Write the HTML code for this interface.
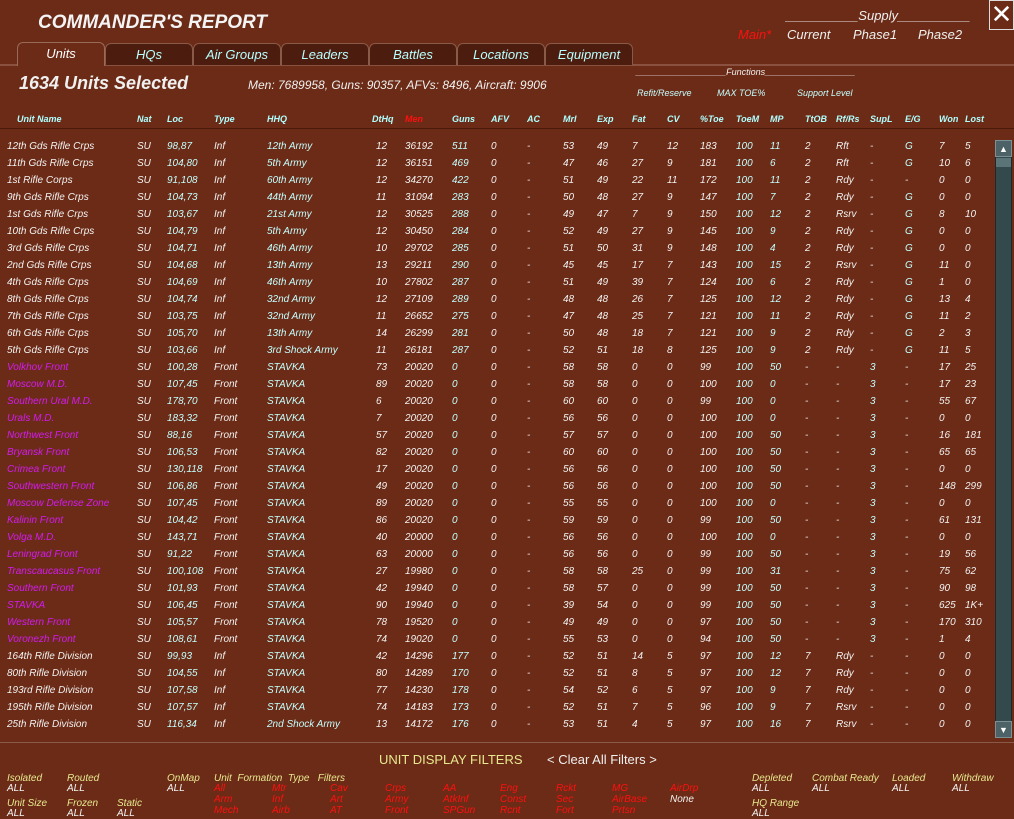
<!DOCTYPE html>
<html><head><meta charset="utf-8"><style>
*{margin:0;padding:0;box-sizing:border-box}
body{width:1014px;height:819px;overflow:hidden;background:#6b2b16;font-family:"Liberation Sans",sans-serif;position:relative;color:#f0f0f0}
.a{position:absolute;white-space:nowrap;font-style:italic}
.title{left:38px;top:12px;font-size:19px;font-weight:bold;color:#f4f4f4}
.tab{position:absolute;top:43px;height:22px;width:88px;border:1px solid #8a5a48;border-bottom:none;border-radius:6px 6px 0 0;background:#4c1d0e;color:#b8ffff;font-size:13px;font-style:italic;text-align:center;line-height:22px}
.tab.act{background:#6b2b16;color:#fff;top:42px;height:24px;border-color:#9a6a58}
.hl{position:absolute;left:0;width:1014px;height:2px;background:#8a5040}
table{position:absolute;left:7px;border-collapse:collapse;table-layout:fixed;font-size:10px;font-style:italic}
td{height:17px;padding:0;white-space:nowrap;overflow:visible;color:#f2f2f2}
thead td{font-weight:bold;color:#b0ffff;font-size:9px}
td.c{color:#c4ffff}
tr.f td:first-child{color:#d21cf0}
.sb{position:absolute;left:995px;top:140px;width:17px;height:598px;background:#33494c;border:1px solid #1d2a2c}
.btn{position:absolute;left:995px;width:17px;height:17px;background:#4c6266;color:#fff;font-size:9px;text-align:center;line-height:17px;border:1px solid #7a9094}
.y{color:#e8e890}.r{color:#ff1010}.w{color:#f4f4f4}
.ft{font-size:10px}
</style></head><body>
<div class="a title">COMMANDER'S REPORT</div>
<div style="position:absolute;left:989px;top:0;width:25px;height:30px;border:1px solid #ddd;color:#fff;font-size:26px;line-height:27px;text-align:center">✕</div>
<div class="a" style="left:786px;top:8px;font-size:13px;color:#f0f0f0">__________Supply__________</div>
<div class="a r" style="left:738px;top:27px;font-size:13px">Main*</div>
<div class="a" style="left:787px;top:27px;font-size:13px">Current</div>
<div class="a" style="left:853px;top:27px;font-size:13px">Phase1</div>
<div class="a" style="left:918px;top:27px;font-size:13px">Phase2</div>
<div class="hl" style="top:64px"></div>
<div class="tab act" style="left:17px">Units</div>
<div class="tab" style="left:105px">HQs</div>
<div class="tab" style="left:193px">Air Groups</div>
<div class="tab" style="left:281px">Leaders</div>
<div class="tab" style="left:369px">Battles</div>
<div class="tab" style="left:457px">Locations</div>
<div class="tab" style="left:545px">Equipment</div>
<div class="a" style="left:19px;top:73px;font-size:18px;font-weight:bold">1634 Units Selected</div>
<div class="a" style="left:248px;top:78px;font-size:12px">Men: 7689958, Guns: 90357, AFVs: 8496, Aircraft: 9906</div>
<div class="a" style="left:636px;top:67px;font-size:9px">__________________Functions__________________</div>
<div class="a" style="left:637px;top:88px;font-size:9px;color:#c4ffff">Refit/Reserve</div>
<div class="a" style="left:717px;top:88px;font-size:9px;color:#c4ffff">MAX TOE%</div>
<div class="a" style="left:797px;top:88px;font-size:9px;color:#c4ffff">Support Level</div>
<div style="position:absolute;left:0;top:128px;width:1014px;height:1px;background:#4a1a0a"></div>
<table style="top:110px">
<colgroup><col style="width:130px"><col style="width:30px"><col style="width:47px"><col style="width:53px"><col style="width:109px"><col style="width:29px"><col style="width:47px"><col style="width:39px"><col style="width:36px"><col style="width:36px"><col style="width:34px"><col style="width:35px"><col style="width:35px"><col style="width:33px"><col style="width:36px"><col style="width:34px"><col style="width:35px"><col style="width:31px"><col style="width:34px"><col style="width:35px"><col style="width:34px"><col style="width:26px"><col style="width:35px"></colgroup>
<thead><tr><td style="padding-left:10px">Unit Name</td><td>Nat</td><td>Loc</td><td>Type</td><td>HHQ</td><td><span style="margin-left:-4px">DtHq</span></td><td style="color:#ff1010">Men</td><td>Guns</td><td>AFV</td><td>AC</td><td>Mrl</td><td>Exp</td><td>Fat</td><td>CV</td><td>%Toe</td><td>ToeM</td><td>MP</td><td>TtOB</td><td>Rf/Rs</td><td>SupL</td><td>E/G</td><td>Won</td><td>Lost</td></tr></thead>
</table>
<table style="top:138px">
<colgroup><col style="width:130px"><col style="width:30px"><col style="width:47px"><col style="width:53px"><col style="width:109px"><col style="width:29px"><col style="width:47px"><col style="width:39px"><col style="width:36px"><col style="width:36px"><col style="width:34px"><col style="width:35px"><col style="width:35px"><col style="width:33px"><col style="width:36px"><col style="width:34px"><col style="width:35px"><col style="width:31px"><col style="width:34px"><col style="width:35px"><col style="width:34px"><col style="width:26px"><col style="width:35px"></colgroup>
<tbody>
<tr><td>12th Gds Rifle Crps</td><td>SU</td><td class="c">98,87</td><td>Inf</td><td class="c">12th Army</td><td>12</td><td>36192</td><td class="c">511</td><td>0</td><td>-</td><td>53</td><td>49</td><td>7</td><td>12</td><td>183</td><td class="c">100</td><td class="c">11</td><td>2</td><td>Rft</td><td>-</td><td class="c">G</td><td>7</td><td>5</td></tr>
<tr><td>11th Gds Rifle Crps</td><td>SU</td><td class="c">104,80</td><td>Inf</td><td class="c">5th Army</td><td>12</td><td>36151</td><td class="c">469</td><td>0</td><td>-</td><td>47</td><td>46</td><td>27</td><td>9</td><td>181</td><td class="c">100</td><td class="c">6</td><td>2</td><td>Rft</td><td>-</td><td class="c">G</td><td>10</td><td>6</td></tr>
<tr><td>1st Rifle Corps</td><td>SU</td><td class="c">91,108</td><td>Inf</td><td class="c">60th Army</td><td>12</td><td>34270</td><td class="c">422</td><td>0</td><td>-</td><td>51</td><td>49</td><td>22</td><td>11</td><td>172</td><td class="c">100</td><td class="c">11</td><td>2</td><td>Rdy</td><td>-</td><td>-</td><td>0</td><td>0</td></tr>
<tr><td>9th Gds Rifle Crps</td><td>SU</td><td class="c">104,73</td><td>Inf</td><td class="c">44th Army</td><td>11</td><td>31094</td><td class="c">283</td><td>0</td><td>-</td><td>50</td><td>48</td><td>27</td><td>9</td><td>147</td><td class="c">100</td><td class="c">7</td><td>2</td><td>Rdy</td><td>-</td><td class="c">G</td><td>0</td><td>0</td></tr>
<tr><td>1st Gds Rifle Crps</td><td>SU</td><td class="c">103,67</td><td>Inf</td><td class="c">21st Army</td><td>12</td><td>30525</td><td class="c">288</td><td>0</td><td>-</td><td>49</td><td>47</td><td>7</td><td>9</td><td>150</td><td class="c">100</td><td class="c">12</td><td>2</td><td>Rsrv</td><td>-</td><td class="c">G</td><td>8</td><td>10</td></tr>
<tr><td>10th Gds Rifle Crps</td><td>SU</td><td class="c">104,79</td><td>Inf</td><td class="c">5th Army</td><td>12</td><td>30450</td><td class="c">284</td><td>0</td><td>-</td><td>52</td><td>49</td><td>27</td><td>9</td><td>145</td><td class="c">100</td><td class="c">9</td><td>2</td><td>Rdy</td><td>-</td><td class="c">G</td><td>0</td><td>0</td></tr>
<tr><td>3rd Gds Rifle Crps</td><td>SU</td><td class="c">104,71</td><td>Inf</td><td class="c">46th Army</td><td>10</td><td>29702</td><td class="c">285</td><td>0</td><td>-</td><td>51</td><td>50</td><td>31</td><td>9</td><td>148</td><td class="c">100</td><td class="c">4</td><td>2</td><td>Rdy</td><td>-</td><td class="c">G</td><td>0</td><td>0</td></tr>
<tr><td>2nd Gds Rifle Crps</td><td>SU</td><td class="c">104,68</td><td>Inf</td><td class="c">13th Army</td><td>13</td><td>29211</td><td class="c">290</td><td>0</td><td>-</td><td>45</td><td>45</td><td>17</td><td>7</td><td>143</td><td class="c">100</td><td class="c">15</td><td>2</td><td>Rsrv</td><td>-</td><td class="c">G</td><td>11</td><td>0</td></tr>
<tr><td>4th Gds Rifle Crps</td><td>SU</td><td class="c">104,69</td><td>Inf</td><td class="c">46th Army</td><td>10</td><td>27802</td><td class="c">287</td><td>0</td><td>-</td><td>51</td><td>49</td><td>39</td><td>7</td><td>124</td><td class="c">100</td><td class="c">6</td><td>2</td><td>Rdy</td><td>-</td><td class="c">G</td><td>1</td><td>0</td></tr>
<tr><td>8th Gds Rifle Crps</td><td>SU</td><td class="c">104,74</td><td>Inf</td><td class="c">32nd Army</td><td>12</td><td>27109</td><td class="c">289</td><td>0</td><td>-</td><td>48</td><td>48</td><td>26</td><td>7</td><td>125</td><td class="c">100</td><td class="c">12</td><td>2</td><td>Rdy</td><td>-</td><td class="c">G</td><td>13</td><td>4</td></tr>
<tr><td>7th Gds Rifle Crps</td><td>SU</td><td class="c">103,75</td><td>Inf</td><td class="c">32nd Army</td><td>11</td><td>26652</td><td class="c">275</td><td>0</td><td>-</td><td>47</td><td>48</td><td>25</td><td>7</td><td>121</td><td class="c">100</td><td class="c">11</td><td>2</td><td>Rdy</td><td>-</td><td class="c">G</td><td>11</td><td>2</td></tr>
<tr><td>6th Gds Rifle Crps</td><td>SU</td><td class="c">105,70</td><td>Inf</td><td class="c">13th Army</td><td>14</td><td>26299</td><td class="c">281</td><td>0</td><td>-</td><td>50</td><td>48</td><td>18</td><td>7</td><td>121</td><td class="c">100</td><td class="c">9</td><td>2</td><td>Rdy</td><td>-</td><td class="c">G</td><td>2</td><td>3</td></tr>
<tr><td>5th Gds Rifle Crps</td><td>SU</td><td class="c">103,66</td><td>Inf</td><td class="c">3rd Shock Army</td><td>11</td><td>26181</td><td class="c">287</td><td>0</td><td>-</td><td>52</td><td>51</td><td>18</td><td>8</td><td>125</td><td class="c">100</td><td class="c">9</td><td>2</td><td>Rdy</td><td>-</td><td class="c">G</td><td>11</td><td>5</td></tr>
<tr class="f"><td>Volkhov Front</td><td>SU</td><td class="c">100,28</td><td>Front</td><td class="c">STAVKA</td><td>73</td><td>20020</td><td class="c">0</td><td>0</td><td>-</td><td>58</td><td>58</td><td>0</td><td>0</td><td>99</td><td class="c">100</td><td class="c">50</td><td>-</td><td>-</td><td class="c">3</td><td>-</td><td>17</td><td>25</td></tr>
<tr class="f"><td>Moscow M.D.</td><td>SU</td><td class="c">107,45</td><td>Front</td><td class="c">STAVKA</td><td>89</td><td>20020</td><td class="c">0</td><td>0</td><td>-</td><td>58</td><td>58</td><td>0</td><td>0</td><td>100</td><td class="c">100</td><td class="c">0</td><td>-</td><td>-</td><td class="c">3</td><td>-</td><td>17</td><td>23</td></tr>
<tr class="f"><td>Southern Ural M.D.</td><td>SU</td><td class="c">178,70</td><td>Front</td><td class="c">STAVKA</td><td>6</td><td>20020</td><td class="c">0</td><td>0</td><td>-</td><td>60</td><td>60</td><td>0</td><td>0</td><td>99</td><td class="c">100</td><td class="c">0</td><td>-</td><td>-</td><td class="c">3</td><td>-</td><td>55</td><td>67</td></tr>
<tr class="f"><td>Urals M.D.</td><td>SU</td><td class="c">183,32</td><td>Front</td><td class="c">STAVKA</td><td>7</td><td>20020</td><td class="c">0</td><td>0</td><td>-</td><td>56</td><td>56</td><td>0</td><td>0</td><td>100</td><td class="c">100</td><td class="c">0</td><td>-</td><td>-</td><td class="c">3</td><td>-</td><td>0</td><td>0</td></tr>
<tr class="f"><td>Northwest Front</td><td>SU</td><td class="c">88,16</td><td>Front</td><td class="c">STAVKA</td><td>57</td><td>20020</td><td class="c">0</td><td>0</td><td>-</td><td>57</td><td>57</td><td>0</td><td>0</td><td>100</td><td class="c">100</td><td class="c">50</td><td>-</td><td>-</td><td class="c">3</td><td>-</td><td>16</td><td>181</td></tr>
<tr class="f"><td>Bryansk Front</td><td>SU</td><td class="c">106,53</td><td>Front</td><td class="c">STAVKA</td><td>82</td><td>20020</td><td class="c">0</td><td>0</td><td>-</td><td>60</td><td>60</td><td>0</td><td>0</td><td>100</td><td class="c">100</td><td class="c">50</td><td>-</td><td>-</td><td class="c">3</td><td>-</td><td>65</td><td>65</td></tr>
<tr class="f"><td>Crimea Front</td><td>SU</td><td class="c">130,118</td><td>Front</td><td class="c">STAVKA</td><td>17</td><td>20020</td><td class="c">0</td><td>0</td><td>-</td><td>56</td><td>56</td><td>0</td><td>0</td><td>100</td><td class="c">100</td><td class="c">50</td><td>-</td><td>-</td><td class="c">3</td><td>-</td><td>0</td><td>0</td></tr>
<tr class="f"><td>Southwestern Front</td><td>SU</td><td class="c">106,86</td><td>Front</td><td class="c">STAVKA</td><td>49</td><td>20020</td><td class="c">0</td><td>0</td><td>-</td><td>56</td><td>56</td><td>0</td><td>0</td><td>100</td><td class="c">100</td><td class="c">50</td><td>-</td><td>-</td><td class="c">3</td><td>-</td><td>148</td><td>299</td></tr>
<tr class="f"><td>Moscow Defense Zone</td><td>SU</td><td class="c">107,45</td><td>Front</td><td class="c">STAVKA</td><td>89</td><td>20020</td><td class="c">0</td><td>0</td><td>-</td><td>55</td><td>55</td><td>0</td><td>0</td><td>100</td><td class="c">100</td><td class="c">0</td><td>-</td><td>-</td><td class="c">3</td><td>-</td><td>0</td><td>0</td></tr>
<tr class="f"><td>Kalinin Front</td><td>SU</td><td class="c">104,42</td><td>Front</td><td class="c">STAVKA</td><td>86</td><td>20020</td><td class="c">0</td><td>0</td><td>-</td><td>59</td><td>59</td><td>0</td><td>0</td><td>99</td><td class="c">100</td><td class="c">50</td><td>-</td><td>-</td><td class="c">3</td><td>-</td><td>61</td><td>131</td></tr>
<tr class="f"><td>Volga M.D.</td><td>SU</td><td class="c">143,71</td><td>Front</td><td class="c">STAVKA</td><td>40</td><td>20000</td><td class="c">0</td><td>0</td><td>-</td><td>56</td><td>56</td><td>0</td><td>0</td><td>100</td><td class="c">100</td><td class="c">0</td><td>-</td><td>-</td><td class="c">3</td><td>-</td><td>0</td><td>0</td></tr>
<tr class="f"><td>Leningrad Front</td><td>SU</td><td class="c">91,22</td><td>Front</td><td class="c">STAVKA</td><td>63</td><td>20000</td><td class="c">0</td><td>0</td><td>-</td><td>56</td><td>56</td><td>0</td><td>0</td><td>99</td><td class="c">100</td><td class="c">50</td><td>-</td><td>-</td><td class="c">3</td><td>-</td><td>19</td><td>56</td></tr>
<tr class="f"><td>Transcaucasus Front</td><td>SU</td><td class="c">100,108</td><td>Front</td><td class="c">STAVKA</td><td>27</td><td>19980</td><td class="c">0</td><td>0</td><td>-</td><td>58</td><td>58</td><td>25</td><td>0</td><td>99</td><td class="c">100</td><td class="c">31</td><td>-</td><td>-</td><td class="c">3</td><td>-</td><td>75</td><td>62</td></tr>
<tr class="f"><td>Southern Front</td><td>SU</td><td class="c">101,93</td><td>Front</td><td class="c">STAVKA</td><td>42</td><td>19940</td><td class="c">0</td><td>0</td><td>-</td><td>58</td><td>57</td><td>0</td><td>0</td><td>99</td><td class="c">100</td><td class="c">50</td><td>-</td><td>-</td><td class="c">3</td><td>-</td><td>90</td><td>98</td></tr>
<tr class="f"><td>STAVKA</td><td>SU</td><td class="c">106,45</td><td>Front</td><td class="c">STAVKA</td><td>90</td><td>19940</td><td class="c">0</td><td>0</td><td>-</td><td>39</td><td>54</td><td>0</td><td>0</td><td>99</td><td class="c">100</td><td class="c">50</td><td>-</td><td>-</td><td class="c">3</td><td>-</td><td>625</td><td>1K+</td></tr>
<tr class="f"><td>Western Front</td><td>SU</td><td class="c">105,57</td><td>Front</td><td class="c">STAVKA</td><td>78</td><td>19520</td><td class="c">0</td><td>0</td><td>-</td><td>49</td><td>49</td><td>0</td><td>0</td><td>97</td><td class="c">100</td><td class="c">50</td><td>-</td><td>-</td><td class="c">3</td><td>-</td><td>170</td><td>310</td></tr>
<tr class="f"><td>Voronezh Front</td><td>SU</td><td class="c">108,61</td><td>Front</td><td class="c">STAVKA</td><td>74</td><td>19020</td><td class="c">0</td><td>0</td><td>-</td><td>55</td><td>53</td><td>0</td><td>0</td><td>94</td><td class="c">100</td><td class="c">50</td><td>-</td><td>-</td><td class="c">3</td><td>-</td><td>1</td><td>4</td></tr>
<tr><td>164th Rifle Division</td><td>SU</td><td class="c">99,93</td><td>Inf</td><td class="c">STAVKA</td><td>42</td><td>14296</td><td class="c">177</td><td>0</td><td>-</td><td>52</td><td>51</td><td>14</td><td>5</td><td>97</td><td class="c">100</td><td class="c">12</td><td>7</td><td>Rdy</td><td>-</td><td>-</td><td>0</td><td>0</td></tr>
<tr><td>80th Rifle Division</td><td>SU</td><td class="c">104,55</td><td>Inf</td><td class="c">STAVKA</td><td>80</td><td>14289</td><td class="c">170</td><td>0</td><td>-</td><td>52</td><td>51</td><td>8</td><td>5</td><td>97</td><td class="c">100</td><td class="c">12</td><td>7</td><td>Rdy</td><td>-</td><td>-</td><td>0</td><td>0</td></tr>
<tr><td>193rd Rifle Division</td><td>SU</td><td class="c">107,58</td><td>Inf</td><td class="c">STAVKA</td><td>77</td><td>14230</td><td class="c">178</td><td>0</td><td>-</td><td>54</td><td>52</td><td>6</td><td>5</td><td>97</td><td class="c">100</td><td class="c">9</td><td>7</td><td>Rdy</td><td>-</td><td>-</td><td>0</td><td>0</td></tr>
<tr><td>195th Rifle Division</td><td>SU</td><td class="c">107,57</td><td>Inf</td><td class="c">STAVKA</td><td>74</td><td>14183</td><td class="c">173</td><td>0</td><td>-</td><td>52</td><td>51</td><td>7</td><td>5</td><td>96</td><td class="c">100</td><td class="c">9</td><td>7</td><td>Rsrv</td><td>-</td><td>-</td><td>0</td><td>0</td></tr>
<tr><td>25th Rifle Division</td><td>SU</td><td class="c">116,34</td><td>Inf</td><td class="c">2nd Shock Army</td><td>13</td><td>14172</td><td class="c">176</td><td>0</td><td>-</td><td>53</td><td>51</td><td>4</td><td>5</td><td>97</td><td class="c">100</td><td class="c">16</td><td>7</td><td>Rsrv</td><td>-</td><td>-</td><td>0</td><td>0</td></tr>
</tbody></table>
<div class="sb"></div>
<div class="btn" style="top:140px">▲</div>
<div class="btn" style="top:721px">▼</div>
<div style="position:absolute;left:996px;top:158px;width:15px;height:9px;background:#5a7478"></div>
<div class="hl" style="top:742px;height:1px;background:#8a5a48"></div>
<div class="a y" style="left:379px;top:752px;font-size:13px;font-style:normal">UNIT DISPLAY FILTERS</div>
<div class="a" style="left:547px;top:752px;font-size:13px;font-style:normal">&lt; Clear All Filters &gt;</div>
<div class="ft">
<div class="a y" style="left:7px;top:773px">Isolated</div><div class="a w" style="left:7px;top:783px">ALL</div>
<div class="a y" style="left:67px;top:773px">Routed</div><div class="a w" style="left:67px;top:783px">ALL</div>
<div class="a y" style="left:167px;top:773px">OnMap</div><div class="a w" style="left:167px;top:783px">ALL</div>
<div class="a y" style="left:214px;top:773px">Unit&nbsp; Formation&nbsp; Type&nbsp;&nbsp; Filters</div>
<div class="a y" style="left:7px;top:798px">Unit Size</div><div class="a w" style="left:7px;top:808px">ALL</div>
<div class="a y" style="left:67px;top:798px">Frozen</div><div class="a w" style="left:67px;top:808px">ALL</div>
<div class="a y" style="left:117px;top:798px">Static</div><div class="a w" style="left:117px;top:808px">ALL</div>
<div class="a r" style="left:214px;top:783px;line-height:11px">All<br>Arm<br>Mech</div>
<div class="a r" style="left:272px;top:783px;line-height:11px">Mtr<br>Inf<br>Airb</div>
<div class="a r" style="left:330px;top:783px;line-height:11px">Cav<br>Art<br>AT</div>
<div class="a r" style="left:385px;top:783px;line-height:11px">Crps<br>Army<br>Front</div>
<div class="a r" style="left:443px;top:783px;line-height:11px">AA<br>AtkInf<br>SPGun</div>
<div class="a r" style="left:500px;top:783px;line-height:11px">Eng<br>Const<br>Rcnt</div>
<div class="a r" style="left:556px;top:783px;line-height:11px">Rckt<br>Sec<br>Fort</div>
<div class="a r" style="left:612px;top:783px;line-height:11px">MG<br>AirBase<br>Prtsn</div>
<div class="a r" style="left:670px;top:783px">AirDrp</div><div class="a w" style="left:670px;top:794px">None</div>
<div class="a y" style="left:752px;top:773px">Depleted</div><div class="a w" style="left:752px;top:783px">ALL</div>
<div class="a y" style="left:812px;top:773px">Combat Ready</div><div class="a w" style="left:812px;top:783px">ALL</div>
<div class="a y" style="left:892px;top:773px">Loaded</div><div class="a w" style="left:892px;top:783px">ALL</div>
<div class="a y" style="left:952px;top:773px">Withdraw</div><div class="a w" style="left:952px;top:783px">ALL</div>
<div class="a y" style="left:752px;top:798px">HQ Range</div><div class="a w" style="left:752px;top:808px">ALL</div>
</div>
</body></html>
